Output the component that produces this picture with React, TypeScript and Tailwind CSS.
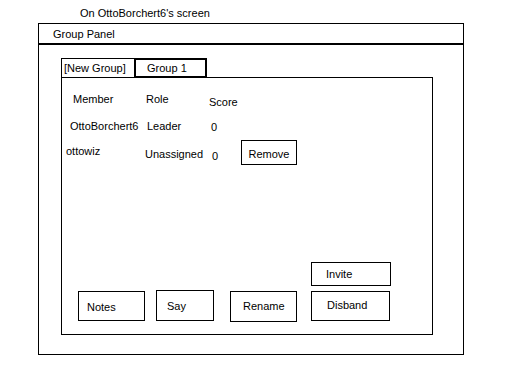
import React from "react";

// Wireframe of the "Group Panel" window as seen by one player
const Box = ({ className, children }: { className: string; children: React.ReactNode }) => (
  <div className={`border border-black ${className}`}>{children}</div>
);

export default function App() {
  return (
    <div className="w-[512px] h-[384px] bg-white text-black text-[11px] leading-[14px] font-['Liberation_Sans',Arial,sans-serif] pt-[6px] overflow-hidden">
      <div className="pl-[80px]">On OttoBorchert6's screen</div>

      {/* Window */}
      <div className="mt-[3px] ml-[38px] w-[426px] h-[332px] border border-black flex flex-col">
        <div className="h-[21px] border-b-2 border-black pt-[3px] pl-[14px]">Group Panel</div>

        <div className="mt-[13px] ml-[22px] flex flex-col">
          {/* Tabs */}
          <div className="flex h-[19px]">
            <div className="w-[73px] border-l border-t border-black pl-[2px] pt-[2px]">[New Group]</div>
            <div className="relative z-10 w-[73px] h-[20px] border-2 border-black pl-[11px] pt-[1px] bg-white">Group 1</div>
          </div>

          {/* Panel */}
          <div className="w-[372px] h-[258px] border border-black flex flex-col">
            <div className="flex items-start mt-[14px] h-[14px]">
              <div className="ml-[11px] w-[73px]">Member</div>
              <div className="w-[63px]">Role</div>
              <div className="mt-[3px]">Score</div>
            </div>

            <div className="flex items-start mt-[13px] h-[14px]">
              <div className="ml-[8px] w-[77px]">OttoBorchert6</div>
              <div className="w-[64px]">Leader</div>
              <div className="mt-[1px]">0</div>
            </div>

            <div className="flex items-start mt-[7px]">
              <div className="ml-[4px] w-[79px] mt-[4px]">ottowiz</div>
              <div className="w-[67px] mt-[7px]">Unassigned</div>
              <div className="w-[29px] mt-[9px]">0</div>
              <Box className="w-[56px] h-[25px] pt-[6px] text-center">Remove</Box>
            </div>

            <div className="mt-auto pb-[12px] flex flex-col">
              <Box className="ml-[249px] w-[80px] h-[24px] pt-[4px] pl-[14px]">Invite</Box>
              <div className="flex items-start mt-[5px]">
                <Box className="ml-[16px] w-[67px] h-[30px] pt-[8px] pl-[8px]">Notes</Box>
                <Box className="ml-[11px] -mt-[1px] w-[58px] h-[31px] pt-[8px] pl-[10px]">Say</Box>
                <Box className="ml-[16px] w-[67px] h-[31px] pt-[7px] pl-[12px]">Rename</Box>
                <Box className="ml-[14px] w-[79px] h-[30px] pt-[6px] pl-[15px]">Disband</Box>
              </div>
            </div>
          </div>
        </div>
      </div>
    </div>
  );
}
